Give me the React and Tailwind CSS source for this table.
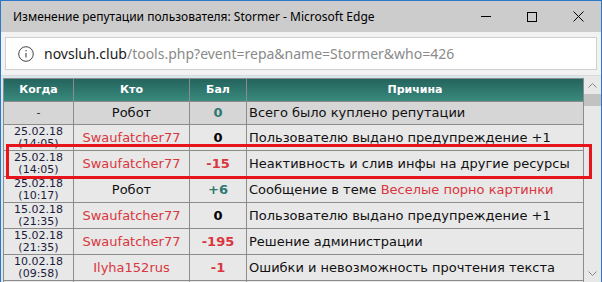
import React from "react";

const rows = [
  { d: "-", t: null, who: "Робот", robot: true, bal: "0", balC: "text-[#2d7872]", r: [["Всего было куплено репутации"]], first: true },
  { d: "25.02.18", t: "(14:05)", who: "Swaufatcher77", bal: "0", balC: "text-black", r: [["Пользователю выдано предупреждение +1"]] },
  { d: "25.02.18", t: "(14:05)", who: "Swaufatcher77", bal: "-15", balC: "text-[#d9363e]", r: [["Неактивность и слив инфы на другие ресурсы"]], hl: true },
  { d: "25.02.18", t: "(10:17)", who: "Робот", robot: true, bal: "+6", balC: "text-[#2d7872]", r: [["Сообщение в теме "], ["Веселые порно картинки", true]] },
  { d: "15.02.18", t: "(21:35)", who: "Swaufatcher77", bal: "0", balC: "text-black", r: [["Пользователю выдано предупреждение +1"]] },
  { d: "15.02.18", t: "(21:35)", who: "Swaufatcher77", bal: "-195", balC: "text-[#d9363e]", r: [["Решение администрации"]] },
  { d: "10.02.18", t: "(09:58)", who: "Ilyha152rus", bal: "-1", balC: "text-[#d9363e]", r: [["Ошибки и невозможность прочтения текста"]] },
  { d: "", t: null, who: "", bal: "", balC: "", r: [[""]] },
];

export default function App() {
  return (
    <div className="w-[602px] h-[282px] overflow-hidden flex flex-col bg-[#f0f0f0] border-x border-t border-[#2b78c9]" style={{ fontFamily: "'Noto Sans', 'Open Sans', sans-serif" }}>
      {/* Title bar */}
      <div className="h-[31px] shrink-0 bg-[#cccccc] flex items-center">
        <div className="pl-[12px] text-[12px] text-black flex-1 whitespace-nowrap">Изменение репутации пользователя: Stormer - Microsoft Edge</div>
        <div className="flex items-center h-full">
          <div className="w-[46px] h-full flex items-center justify-center">
            <div className="w-[10px] h-px bg-black" />
          </div>
          <div className="w-[46px] h-full flex items-center justify-center">
            <div className="w-[10px] h-[10px] border border-black" />
          </div>
          <div className="w-[46px] h-full flex items-center justify-center">
            <svg width="11" height="11" viewBox="0 0 11 11"><path d="M0.5 0.5L10.5 10.5M10.5 0.5L0.5 10.5" stroke="#000" strokeWidth="1" /></svg>
          </div>
        </div>
      </div>
      {/* Address bar */}
      <div className="h-[44px] shrink-0 bg-[#f2f2f2] px-[4px] pt-[5px] pb-[5px] border-b border-[#dadada]">
        <div className="h-full bg-white border border-[#cfcfcf] flex items-center">
          <div className="w-[38px] flex justify-center pl-[2px]">
            <svg width="16" height="16" viewBox="0 0 16 16">
              <circle cx="8" cy="8" r="7.3" fill="none" stroke="#444" strokeWidth="1" />
              <path d="M8 7v4.5" stroke="#444" strokeWidth="1.1" />
              <circle cx="8" cy="4.8" r="0.7" fill="#444" />
            </svg>
          </div>
          <div className="text-[14px] whitespace-nowrap">
            <span className="text-[#1a1a1a]">novsluh.club</span>
            <span className="text-[#8a8a8a]">/tools.php?event=repa&amp;name=Stormer&amp;who=426</span>
          </div>
        </div>
      </div>
      {/* Content */}
      <div className="flex-1 flex bg-[#d8e6ee] min-h-0">
        <div className="flex-1 pl-[2px] pt-[2px] relative min-w-0" style={{ fontFamily: "'DejaVu Sans', Verdana, sans-serif" }}>
          <div className="w-[581px] bg-[#8c8c8c] border border-[#8c8c8c]">
            <div className="grid grid-cols-[69px_115px_56px_1fr] gap-px">
              {["Когда", "Кто", "Бал", "Причина"].map((h) => (
                <div key={h} className="h-[22px] flex items-center justify-center text-white font-bold text-[11px] bg-gradient-to-b from-[#24645d] to-[#3a8a7e]">{h}</div>
              ))}
              {rows.map((row, i) => {
                const bg = row.first ? "bg-[#d6d6d6]" : "bg-[#e8e8e8]";
                const h = row.first ? "h-[22px]" : "h-[25px]";
                return (
                  <React.Fragment key={i}>
                    <div className={`${bg} ${h} flex flex-col items-center justify-center text-[11px] leading-[12px] text-[#1c1c3c]`}>
                      <div>{row.d}</div>
                      {row.t && <div>{row.t}</div>}
                    </div>
                    <div className={`${bg} ${h} flex items-center justify-center text-[13px] ${row.robot ? "text-[#111]" : "text-[#d9363e]"}`}>{row.who}</div>
                    <div className={`${bg} ${h} flex items-center justify-center text-[13px] font-bold ${row.balC}`}>{row.bal}</div>
                    <div className={`${bg} ${h} flex items-center pl-[2px] text-[13px] text-[#111] whitespace-nowrap`}>
                      {row.r.map(([txt, red], j) => (
                        <span key={j} className={red ? "text-[#d9363e] whitespace-pre" : "whitespace-pre"}>{txt}</span>
                      ))}
                    </div>
                  </React.Fragment>
                );
              })}
            </div>
          </div>
          <div className="absolute left-[5px] top-[68px] w-[586px] h-[35px] border-[3px] border-[#e8141c]" />
        </div>
        {/* Scrollbar */}
        <div className="w-[17px] shrink-0 bg-[#e8e8e8] flex flex-col items-center">
          <div className="h-[18px] flex items-center justify-center">
            <svg width="9" height="5" viewBox="0 0 9 5"><path d="M0.5 4.5L4.5 0.5L8.5 4.5" fill="none" stroke="#888" /></svg>
          </div>
          <div className="w-full h-[12px] bg-[#c2c2c2]" />
          <div className="flex-1" />
          <div className="h-[18px] flex items-center justify-center">
            <svg width="9" height="5" viewBox="0 0 9 5"><path d="M0.5 0.5L4.5 4.5L8.5 0.5" fill="none" stroke="#888" /></svg>
          </div>
        </div>
      </div>
    </div>
  );
}
